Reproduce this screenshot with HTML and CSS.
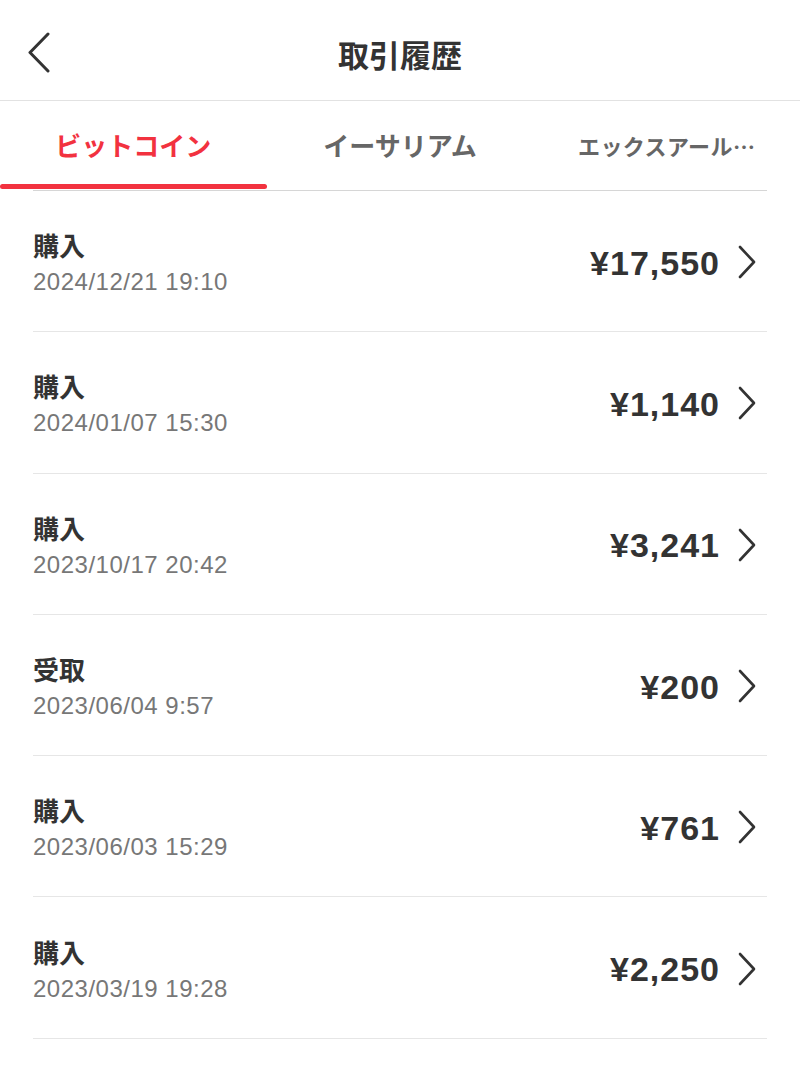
FILE: index.html
```html
<!DOCTYPE html>
<html lang="ja">

<head>
  <meta charset="UTF-8">
  <meta name="viewport" content="width=device-width, initial-scale=1.0">
  <link rel="stylesheet" href="styles.css">
  <title>取引履歴</title>
</head>

<body>
  <div class="screen">
    <!-- Header -->
    <header class="top-bar">
      <a class="back" href="#">
        <svg width="24" height="41" viewBox="0 0 24 41">
          <path d="M21 2 L3 20.5 L21 39" fill="none" stroke="#333" stroke-width="3" stroke-linecap="round" stroke-linejoin="round"/>
        </svg>
      </a>
      <h1>取引履歴</h1>
    </header>

    <!-- Tabs -->
    <nav class="tabs">
      <div class="tab active"><span class="tab-label">ビットコイン</span><span class="tab-bar"></span></div>
      <div class="tab"><span class="tab-label">イーサリアム</span><span class="tab-bar"></span></div>
      <div class="tab small"><span class="tab-label">エックスアール…</span><span class="tab-bar"></span></div>
    </nav>
    <div class="tab-rule"></div>

    <!-- History list -->
    <ul class="history">
      <li class="row">
        <div class="info"><div class="kind">購入</div><div class="date">2024/12/21 19:10</div></div>
        <div class="amount">¥17,550</div>
        <svg class="arrow" width="20" height="34" viewBox="0 0 20 34"><path d="M3 2 L17 17 L3 32" fill="none" stroke="#333" stroke-width="2.6" stroke-linecap="round" stroke-linejoin="round"/></svg>
      </li>
      <li class="row">
        <div class="info"><div class="kind">購入</div><div class="date">2024/01/07 15:30</div></div>
        <div class="amount">¥1,140</div>
        <svg class="arrow" width="20" height="34" viewBox="0 0 20 34"><path d="M3 2 L17 17 L3 32" fill="none" stroke="#333" stroke-width="2.6" stroke-linecap="round" stroke-linejoin="round"/></svg>
      </li>
      <li class="row">
        <div class="info"><div class="kind">購入</div><div class="date">2023/10/17 20:42</div></div>
        <div class="amount">¥3,241</div>
        <svg class="arrow" width="20" height="34" viewBox="0 0 20 34"><path d="M3 2 L17 17 L3 32" fill="none" stroke="#333" stroke-width="2.6" stroke-linecap="round" stroke-linejoin="round"/></svg>
      </li>
      <li class="row">
        <div class="info"><div class="kind">受取</div><div class="date">2023/06/04 9:57</div></div>
        <div class="amount">¥200</div>
        <svg class="arrow" width="20" height="34" viewBox="0 0 20 34"><path d="M3 2 L17 17 L3 32" fill="none" stroke="#333" stroke-width="2.6" stroke-linecap="round" stroke-linejoin="round"/></svg>
      </li>
      <li class="row">
        <div class="info"><div class="kind">購入</div><div class="date">2023/06/03 15:29</div></div>
        <div class="amount">¥761</div>
        <svg class="arrow" width="20" height="34" viewBox="0 0 20 34"><path d="M3 2 L17 17 L3 32" fill="none" stroke="#333" stroke-width="2.6" stroke-linecap="round" stroke-linejoin="round"/></svg>
      </li>
      <li class="row">
        <div class="info"><div class="kind">購入</div><div class="date">2023/03/19 19:28</div></div>
        <div class="amount">¥2,250</div>
        <svg class="arrow" width="20" height="34" viewBox="0 0 20 34"><path d="M3 2 L17 17 L3 32" fill="none" stroke="#333" stroke-width="2.6" stroke-linecap="round" stroke-linejoin="round"/></svg>
      </li>
    </ul>
  </div>
</body>

</html>
```

FILE: styles.css
```css
body {
  margin: 0;
  padding: 0;
  background-color: #ffffff;
  font-family: "Liberation Sans", "Noto Sans CJK JP", sans-serif;
  color: #333;
}

.screen {
  width: 800px;
}

/* header */
.top-bar {
  height: 100px;
  border-bottom: 1px solid #e2e2e2;
  display: flex;
  align-items: center;
  justify-content: center;
  position: relative;
}

.back {
  position: absolute;
  left: 27px;
  top: 32px;
  display: block;
  line-height: 0;
}

.top-bar h1 {
  margin: 0;
  font-family: "Noto Sans CJK JP", sans-serif;
  font-size: 31px;
  font-weight: 700;
  color: #333;
  padding-top: 6px;
}

/* tabs */
.tabs {
  display: flex;
  height: 89px;
}

.tab {
  flex: 1;
  display: flex;
  flex-direction: column;
  align-items: center;
}

.tab-label {
  font-family: "Noto Sans CJK JP", sans-serif;
  font-size: 26px;
  font-weight: 700;
  color: #666;
  line-height: 36px;
  margin-top: 26px;
}

.tab.small .tab-label {
  font-size: 22px;
  letter-spacing: 0.4px;
}

.tab-bar {
  margin-top: auto;
  margin-bottom: 1px;
  width: 100%;
  height: 5px;
  border-radius: 3px;
}

.tab.active .tab-label {
  color: #f2323f;
}

.tab.active .tab-bar {
  background-color: #f2323f;
}

.tab-rule {
  margin: 0 33px;
  border-top: 1px solid #d6d6d6;
}

/* list */
.history {
  list-style: none;
  margin: 0 33px;
  padding: 0;
}

.row {
  height: 140.3px;
  border-bottom: 1px solid #e6e6e6;
  display: flex;
  align-items: center;
}

.info {
  flex: 1;
  padding-top: 2px;
}

.kind {
  font-family: "Noto Sans CJK JP", sans-serif;
  font-size: 26px;
  font-weight: 700;
  line-height: 34px;
  color: #333;
}

.date {
  font-size: 24px;
  letter-spacing: 0.5px;
  color: #777;
  margin-top: 6px;
  line-height: 28px;
}

.amount {
  font-size: 34px;
  font-weight: 700;
  letter-spacing: 1px;
  color: #333;
  padding-top: 4px;
}

.arrow {
  margin-left: 17px;
  margin-right: 10px;
  margin-top: 2px;
}
```
